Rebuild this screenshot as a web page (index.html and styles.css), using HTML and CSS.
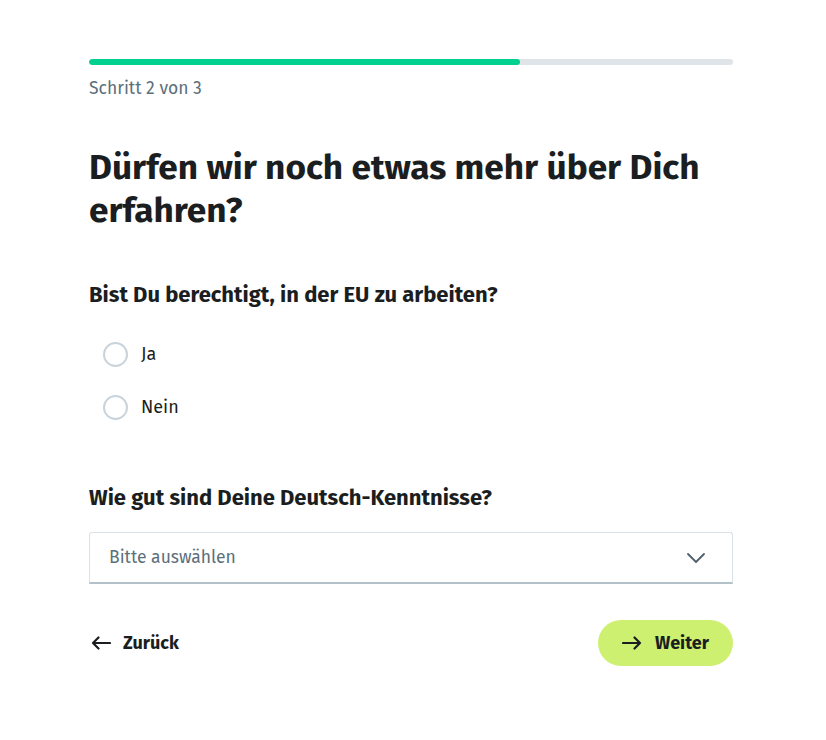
FILE: index.html
```html
<!DOCTYPE html>
<html lang="de">
<head>
<meta charset="utf-8">
<link rel="stylesheet" href="styles.css">
</head>
<body>
<main class="wrap">
  <div class="progress"><div class="fill"></div></div>
  <div class="step">Schritt 2 von 3</div>
  <h1 class="title">Dürfen wir noch etwas mehr über Dich erfahren?</h1>

  <h2 class="question q1">Bist Du berechtigt, in der EU zu arbeiten?</h2>
  <div class="radios">
    <label class="radio"><span class="circle"></span><span class="rlabel">Ja</span></label>
    <label class="radio"><span class="circle"></span><span class="rlabel">Nein</span></label>
  </div>

  <h2 class="question q2">Wie gut sind Deine Deutsch-Kenntnisse?</h2>
  <div class="select">
    <span class="placeholder">Bitte auswählen</span>
    <svg class="chev" width="20" height="12" viewBox="0 0 20 12"><path d="M2 2 L10 10 L18 2" fill="none" stroke="#4d5f6a" stroke-width="1.8" stroke-linecap="round" stroke-linejoin="round"/></svg>
  </div>

  <div class="nav">
    <div class="back">
      <svg width="20" height="14" viewBox="0 0 20 14"><path d="M19 7 H2 M7.5 1.5 L2 7 L7.5 12.5" fill="none" stroke="#1b1e21" stroke-width="2.2" stroke-linecap="round" stroke-linejoin="round"/></svg>
      <span>Zurück</span>
    </div>
    <div class="next">
      <svg width="20" height="14" viewBox="0 0 20 14"><path d="M1 7 H18 M12.5 1.5 L18 7 L12.5 12.5" fill="none" stroke="#1b1e21" stroke-width="2.2" stroke-linecap="round" stroke-linejoin="round"/></svg>
      <span>Weiter</span>
    </div>
  </div>
</main>
</body>
</html>
```

FILE: styles.css
```css
* { box-sizing: border-box; }
html, body { margin: 0; background: #ffffff; }
body {
  font-family: "Fira Sans", Roboto, "Noto Sans", sans-serif;
  color: #1b1e21;
}
.wrap {
  width: 644px;
  margin-left: 89px;
  padding-top: 59px;
}
.progress {
  height: 6px;
  border-radius: 3px;
  background: #dfe4e9;
  overflow: hidden;
}
.fill {
  width: 67%;
  height: 100%;
  background: #02d08e;
  border-radius: 3px;
}
.step {
  margin-top: 14px;
  font-size: 17.5px;
  line-height: 20px;
  color: #5c6f7b;
}
.title {
  margin: 47px 0 0;
  font-size: 35.2px;
  line-height: 43px;
  font-weight: 700;
}
.question {
  margin: 0;
  font-size: 22px;
  line-height: 26px;
  font-weight: 700;
}
.q1 { margin-top: 50px; }
.radios {
  margin-top: 33px;
  display: flex;
  flex-direction: column;
  gap: 27px;
}
.radio {
  display: flex;
  align-items: center;
  height: 26px;
}
.circle {
  width: 25px;
  height: 25px;
  border-radius: 50%;
  border: 2px solid #c8d3db;
  margin-left: 14px;
  margin-right: 13px;
}
.rlabel {
  font-size: 18px;
  line-height: 26px;
}
.q2 { margin-top: 65px; }
.select {
  margin-top: 21px;
  height: 52px;
  border: 1px solid #dbe2e7;
  border-bottom: 2px solid #b3c1ca;
  border-radius: 3px 3px 0 0;
  display: flex;
  align-items: center;
  justify-content: space-between;
  padding: 0 26px 0 19px;
}
.placeholder {
  font-size: 17.5px;
  color: #5c6f7b;
}
.nav {
  margin-top: 36px;
  display: flex;
  justify-content: space-between;
  align-items: center;
}
.back, .next {
  display: flex;
  align-items: center;
  font-size: 18px;
  font-weight: 700;
}
.back { padding-left: 2px; gap: 12px; }
.next {
  height: 46px;
  width: 135px;
  border-radius: 23px;
  background: #cdf070;
  justify-content: center;
  gap: 13px;
}
```
